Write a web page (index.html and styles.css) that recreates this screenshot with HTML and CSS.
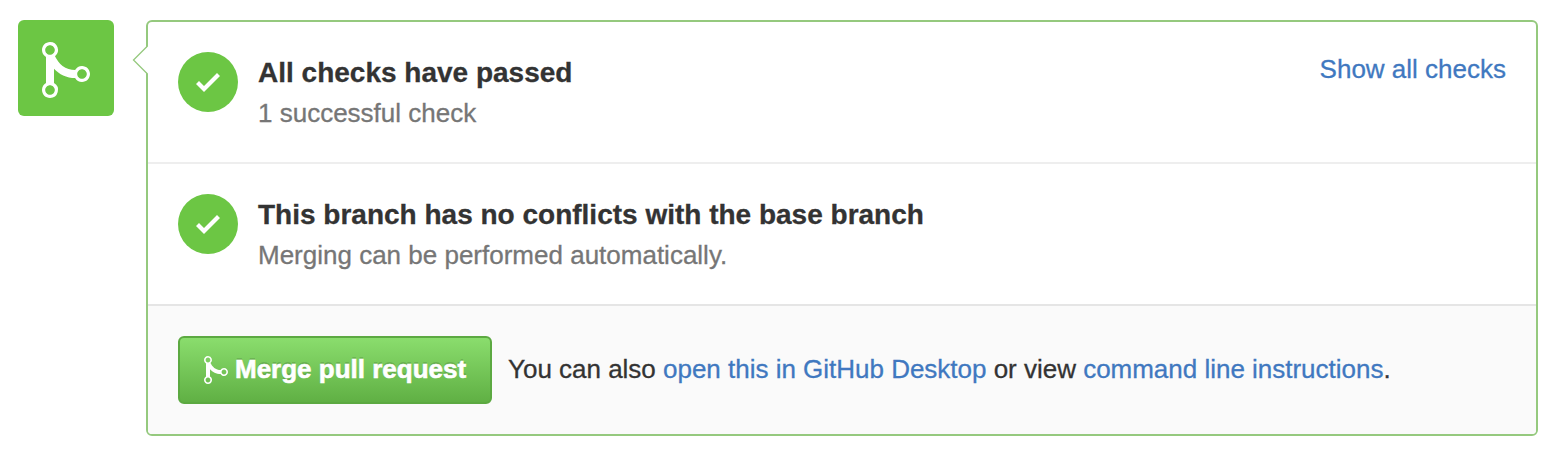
FILE: index.html
```html
<!DOCTYPE html>
<html lang="en">
<head>
<meta charset="utf-8">
<title>Merge pull request</title>
<link rel="stylesheet" href="styles.css">
</head>
<body>
<svg class="defs" width="0" height="0" aria-hidden="true">
  <symbol id="git-merge" viewBox="0 0 12 16"><path fill-rule="evenodd" d="M10 7c-.73 0-1.38.41-1.73 1.02V8C7.22 7.98 6 7.64 5.14 6.98c-.75-.58-1.5-1.61-1.89-2.44A1.993 1.993 0 0 0 2 .99C.89.99 0 1.89 0 3a2 2 0 0 0 1 1.72v6.56c-.59.35-1 .99-1 1.72 0 1.11.89 2 2 2a1.993 1.993 0 0 0 1-3.72V7.67c.67.7 1.44 1.27 2.3 1.69.86.42 2.03.63 2.97.64v-.02c.36.61 1 1.02 1.73 1.02 1.11 0 2-.89 2-2 0-1.11-.89-2-2-2zm-6.8 6c0 .66-.55 1.2-1.2 1.2-.65 0-1.2-.55-1.2-1.2 0-.65.55-1.2 1.2-1.2.65 0 1.2.55 1.2 1.2zM2 4.2C1.34 4.2.8 3.65.8 3c0-.65.55-1.2 1.2-1.2.65 0 1.2.55 1.2 1.2 0 .65-.55 1.2-1.2 1.2zm8 6c-.66 0-1.2-.55-1.2-1.2 0-.65.55-1.2 1.2-1.2.65 0 1.2.55 1.2 1.2 0 .65-.55 1.2-1.2 1.2z"/></symbol>
  <symbol id="check" viewBox="0 0 12 16"><path d="M12 5l-8 8-4-4 1.5-1.5L4 10l6.5-6.5z"/></symbol>
</svg>
<main class="merge-area">
  <div class="merge-badge"><svg class="badge-icon"><use href="#git-merge"/></svg></div>
  <div class="merge-box">
    <svg class="caret" viewBox="0 0 16 30"><path class="caret-fill" d="M16 1L1.5 15L16 29z"/><path class="caret-line" d="M15.5 1L1.5 15L15.5 29"/></svg>
    <section class="status">
      <span class="status-icon"><svg class="check-icon"><use href="#check"/></svg></span>
      <div class="status-text">
        <h2 class="heading">All checks have passed</h2>
        <p class="meta">1 successful check</p>
      </div>
      <a class="link toggle">Show all checks</a>
    </section>
    <section class="status">
      <span class="status-icon"><svg class="check-icon"><use href="#check"/></svg></span>
      <div class="status-text">
        <h2 class="heading">This branch has no conflicts with the base branch</h2>
        <p class="meta">Merging can be performed automatically.</p>
      </div>
    </section>
    <footer class="actions">
      <button class="merge-button" type="button"><svg class="button-icon"><use href="#git-merge"/></svg><span class="button-label">Merge pull request</span></button>
      <p class="hint">You can also <a class="link">open this in GitHub Desktop</a> or view <a class="link">command line instructions</a>.</p>
    </footer>
  </div>
</main>
</body>
</html>
```
FILE: styles.css
```css
* { box-sizing: border-box; }
body {
  margin: 0;
  background: #fff;
  color: #333;
  font-family: "Liberation Sans", Arial, sans-serif;
  font-size: 26px;
  -webkit-text-stroke: .3px currentColor;
}
.defs { display: block; }
.merge-area {
  display: flex;
  gap: 32px;
  align-items: flex-start;
  padding: 20px 16px 0 18px;
}
.merge-badge {
  display: flex;
  flex: none;
  align-items: center;
  justify-content: center;
  width: 96px;
  height: 96px;
  padding-top: 4px;
  border-radius: 6px;
  background: #6cc644;
}
.badge-icon { width: 48px; height: 64px; fill: #fff; }
.merge-box {
  position: relative;
  flex: 1;
  border: 2px solid #95c97e;
  border-radius: 6px;
}
.caret {
  position: absolute;
  top: 23px;
  left: -16px;
  width: 16px;
  height: 30px;
}
.caret-fill { fill: #fff; }
.caret-line { fill: none; stroke: #95c97e; stroke-width: 1.3; }
.status {
  display: flex;
  align-items: flex-start;
  height: 142px;
  padding: 30px;
  border-bottom: 2px solid #eee;
}
.status + .status { border-bottom-color: #e5e5e5; }
.status-icon {
  display: flex;
  flex: none;
  align-items: center;
  justify-content: center;
  width: 60px;
  height: 60px;
  margin-right: 20px;
  border-radius: 50%;
  background: #6cc644;
}
.check-icon { width: 24px; height: 32px; fill: #fff; }
.status-text { flex: 1; }
.heading { margin: 0; font-size: 28px; line-height: 42px; white-space: nowrap; }
.meta { margin: 0; color: #767676; line-height: 39px; white-space: nowrap; }
.link { color: #4078c0; -webkit-text-stroke-color: #4078c0; }
.meta { -webkit-text-stroke-color: #767676; }
.toggle { line-height: 34px; white-space: nowrap; }
.actions {
  display: flex;
  align-items: center;
  height: 128px;
  padding: 0 30px;
  border-radius: 0 0 4px 4px;
  background: #fafafa;
}
.merge-button {
  display: flex;
  align-items: center;
  width: 314px;
  height: 68px;
  margin-right: 16px;
  padding: 0 0 0 24px;
  border: 2px solid #5ca941;
  border-radius: 6px;
  background: linear-gradient(#8add6d, #60b044);
  color: #fff;
  font: bold 26px/36px "Liberation Sans", Arial, sans-serif;
  text-shadow: 0 -2px 0 rgba(0, 0, 0, .15);
  -webkit-text-stroke: .6px #fff;
}
.button-icon { width: 24px; height: 32px; margin-right: 7px; fill: #fff; }
.button-label { padding-bottom: 2px; white-space: nowrap; }
.hint { margin: 0; padding-bottom: 2px; line-height: 39px; letter-spacing: -.012px; white-space: nowrap; }
```
